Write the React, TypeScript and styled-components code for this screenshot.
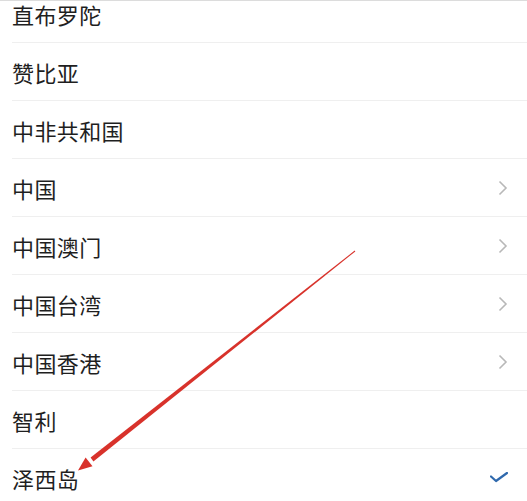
import React from "react";
import styled, { createGlobalStyle } from "styled-components";

const Global = createGlobalStyle`
  html, body { margin: 0; padding: 0; background: #fff; }
  body { font-family: "Noto Sans CJK SC", "Noto Sans", sans-serif; }
`;

const Page = styled.div`
  position: relative;
  width: 527px;
  height: 501px;
  overflow: hidden;
  background: #fff;
  border-top: 1px solid #dcdcdc;
  box-sizing: border-box;
`;

const List = styled.ul`
  list-style: none;
  margin: -16px 0 0 0;
  padding: 0 0 0 12px;
`;

const Row = styled.li`
  display: flex;
  align-items: center;
  height: 57px;
  padding-right: 19px;
  border-bottom: 1px solid #efefef;
`;

const Label = styled.span`
  flex: 1;
  font-size: 22px;
  line-height: 1;
  color: #1f1f1f;
  letter-spacing: 0.4px;
`;

const IconBox = styled.span`
  display: flex;
  align-items: center;
  justify-content: flex-end;
  width: 20px;
`;

const Overlay = styled.svg`
  position: absolute;
  left: 0;
  top: 0;
  pointer-events: none;
`;

const Chevron = () => (
  <svg width="10" height="16" viewBox="0 0 10 16">
    <path d="M1.5 1.5 L8 8 L1.5 14.5" fill="none" stroke="#b8b8b8" strokeWidth="1.6" />
  </svg>
);

const Check = () => (
  <svg width="18" height="11" viewBox="0 0 18 11">
    <path d="M1 4.5 L6 9 L17 1" fill="none" stroke="#2f69ad" strokeWidth="2.2" strokeLinecap="round" strokeLinejoin="round" />
  </svg>
);

type Item = { name: string; mark?: "chevron" | "check" };

const items: Item[] = [
  { name: "直布罗陀" },
  { name: "赞比亚" },
  { name: "中非共和国" },
  { name: "中国", mark: "chevron" },
  { name: "中国澳门", mark: "chevron" },
  { name: "中国台湾", mark: "chevron" },
  { name: "中国香港", mark: "chevron" },
  { name: "智利" },
  { name: "泽西岛", mark: "check" },
];

export default function App() {
  return (
    <>
      <Global />
      <Page>
        <List>
          {items.map((it) => (
            <Row key={it.name}>
              <Label>{it.name}</Label>
              <IconBox>
                {it.mark === "chevron" && <Chevron />}
                {it.mark === "check" && <Check />}
              </IconBox>
            </Row>
          ))}
        </List>
        <Overlay width="527" height="501" viewBox="0 0 527 501">
          <polygon
            points="355.3,250.4 354.7,249.6 90.6,456.6 93.4,460.4"
            fill="#d8322b"
          />
          <polygon points="78,469.5 85.6,456.5 92.5,465.2" fill="#d8322b" />
        </Overlay>
      </Page>
    </>
  );
}
